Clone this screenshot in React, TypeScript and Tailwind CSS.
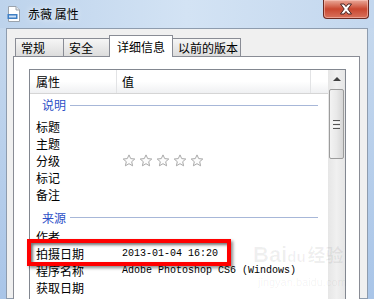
import React from 'react';

const Star = () => (
  <svg width="14" height="13" viewBox="0 0 14 13" className="shrink-0">
    <path
      d="M7 0.9 L8.7 4.6 L12.8 5 L9.7 7.7 L10.6 11.8 L7 9.7 L3.4 11.8 L4.3 7.7 L1.2 5 L5.3 4.6 Z"
      fill="#fcfcfc"
      stroke="#a9a9a9"
      strokeWidth="1"
      strokeLinejoin="round"
    />
  </svg>
);

const FileIcon = () => (
  <svg width="14" height="16" viewBox="0 0 14 16">
    <path d="M1.5 0.5 H9 L12.5 4 V15.5 H1.5 Z" fill="#ffffff" stroke="#9aa3ad" />
    <path d="M9 0.5 V4 H12.5" fill="#e6eaee" stroke="#9aa3ad" />
    <rect x="0.5" y="8" width="10" height="5" fill="#3f7fc4" />
    <rect x="2" y="9.5" width="7" height="2" fill="#cfe2f6" />
  </svg>
);

const CloseX = () => (
  <svg width="14" height="12" viewBox="0 0 14 12">
    <path
      d="M1.5 1 H5 L7 3.6 L9 1 H12.5 L8.8 6 L12.5 11 H9 L7 8.4 L5 11 H1.5 L5.2 6 Z"
      fill="#ffffff"
      stroke="#4a2320"
      strokeWidth="1"
      strokeLinejoin="round"
    />
  </svg>
);

const Group = ({ label, className }: { label: string; className: string }) => (
  <div className={`flex items-center pl-[12px] pr-[10px] ${className}`}>
    <span className="text-[#2c4fc7]">{label}</span>
    <div className="ml-[4px] h-px flex-1 bg-[#a7b7d8]" />
  </div>
);

const Row = ({ name, children }: { name: string; children?: React.ReactNode }) => (
  <div className="flex h-[17px] items-center">
    <div className="w-[92px] shrink-0 pl-[6px]">{name}</div>
    <div className="flex items-center">{children}</div>
  </div>
);

const Mono = ({ text }: { text: string }) => (
  <span className="font-['Liberation_Mono',monospace] text-[10px] whitespace-pre">{text}</span>
);

const tabs = [
  { label: '常规', w: 'w-[49px]', active: false },
  { label: '安全', w: 'w-[47px]', active: false },
  { label: '详细信息', w: 'w-[64px]', active: true },
  { label: '以前的版本', w: 'w-[69px]', active: false },
];

export default function App() {
  return (
    <div className="relative h-[299px] w-[374px] overflow-hidden bg-linear-to-b from-[#c8daee] to-[#a9c5e8] font-['Noto_Sans_CJK_SC',sans-serif] text-[12px] leading-none text-black">
      {/* title bar */}
      <div className="flex h-[28px] items-start bg-linear-to-r from-[#bdd3ec] via-[#d3e3f4] to-[#c3d7ee]">
        <div className="ml-[7px] mt-[6px]">
          <FileIcon />
        </div>
        <div className="ml-[7px] mt-[8px] text-[12px] [text-shadow:0_0_6px_rgba(255,255,255,0.9)]">赤薇 属性</div>
        <div className="ml-auto mr-[5px] flex h-[19px] w-[46px] items-center justify-center rounded-b-[4px] border border-t-0 border-[#6b2a22] bg-linear-to-b from-[#e9a899] via-[#c9462f] to-[#d8715c] shadow-[inset_0_0_0_1px_rgba(255,210,200,0.5)]">
          <CloseX />
        </div>
      </div>

      {/* client area */}
      <div className="mx-[6px] h-[271px] border border-[#8e9cae] bg-[#f0f0f0]">
        {/* tabs */}
        <div className="flex h-[27px] items-end pl-[8px]">
          {tabs.map((t) =>
            t.active ? (
              <div
                key={t.label}
                className={`relative z-10 -mb-px -ml-px flex h-[22px] ${t.w} items-center border border-b-0 border-[#898c95] bg-white pl-[7px]`}
              >
                {t.label}
              </div>
            ) : (
              <div
                key={t.label}
                className={`-ml-px flex h-[18px] ${t.w} items-center border border-b-0 border-[#898c95] bg-linear-to-b from-[#f6f6f6] to-[#dcdcdc] pl-[5px] first:ml-0`}
              >
                {t.label}
              </div>
            ),
          )}
        </div>

        {/* tab page */}
        <div className="relative ml-[6px] h-[260px] w-[347px] border border-[#898c95] bg-white pl-[15px] pt-[12px]">
          <div className="flex h-[240px] w-[317px] border border-[#828790]">
            {/* list content */}
            <div className="flex w-[298px] flex-col">
              <div className="flex h-[24px] items-center border-b border-[#d5d5d5] bg-linear-to-b from-white via-white to-[#eff0f2]">
                <div className="flex h-full w-[87px] items-center border-r border-[#e2e3e5] pl-[6px]">属性</div>
                <div className="flex h-full w-[194px] items-center border-r border-[#e2e3e5] pl-[5px]">值</div>
              </div>
              <Group label="说明" className="h-[24px] pb-[2px]" />
              <Row name="标题" />
              <Row name="主题" />
              <Row name="分级">
                <div className="flex gap-[3px]">
                  <Star />
                  <Star />
                  <Star />
                  <Star />
                  <Star />
                </div>
              </Row>
              <Row name="标记" />
              <Row name="备注" />
              <Group label="来源" className="h-[25px] pt-[4px]" />
              <Row name="作者" />
              <Row name="拍摄日期">
                <Mono text="2013-01-04 16:20" />
              </Row>
              <Row name="程序名称">
                <Mono text="Adobe Photoshop CS6 (Windows)" />
              </Row>
              <Row name="获取日期" />
            </div>

            {/* scrollbar */}
            <div className="flex w-[17px] flex-col items-center bg-linear-to-r from-[#e6e6e6] via-[#f0f0f0] to-[#e6e6e6]">
              <div className="flex h-[18px] w-full items-center justify-center">
                <div className="h-0 w-0 border-x-[4px] border-b-[4px] border-x-transparent border-b-[#404040]" />
              </div>
              <div className="mt-[1px] flex h-[70px] w-[15px] flex-col items-center justify-center gap-[1px] rounded-[2px] border border-[#9c9c9c] bg-linear-to-r from-[#f3f3f3] via-[#e9e9e9] to-[#d6d6d6]">
                <div className="h-px w-[7px] bg-[#555]" />
                <div className="h-px w-[7px] bg-[#f8f8f8]" />
                <div className="h-px w-[7px] bg-[#555]" />
                <div className="h-px w-[7px] bg-[#f8f8f8]" />
                <div className="h-px w-[7px] bg-[#555]" />
              </div>
            </div>
          </div>
        </div>
      </div>

      {/* red highlight box */}
      <div className="absolute left-[27px] top-[239px] h-[27px] w-[204px] border-[4px] border-[#ff0000] shadow-[inset_2px_2px_3px_rgba(0,0,0,0.55),2px_2px_3px_rgba(0,0,0,0.45)]" />

      {/* watermark */}
      <div className="absolute left-[253px] top-[244px] font-['Liberation_Sans',sans-serif] text-[22px] font-bold leading-none text-black/[0.06]">
        Bai<span className="text-[15px]">du</span>
        <span className="ml-[2px] font-['Noto_Sans_CJK_SC',sans-serif] text-[18px]">经验</span>
      </div>
      <div className="absolute left-[258px] top-[277px] font-['Liberation_Sans',sans-serif] text-[11px] leading-none text-black/[0.06]">
        jingyan.baidu.com
      </div>
    </div>
  );
}
